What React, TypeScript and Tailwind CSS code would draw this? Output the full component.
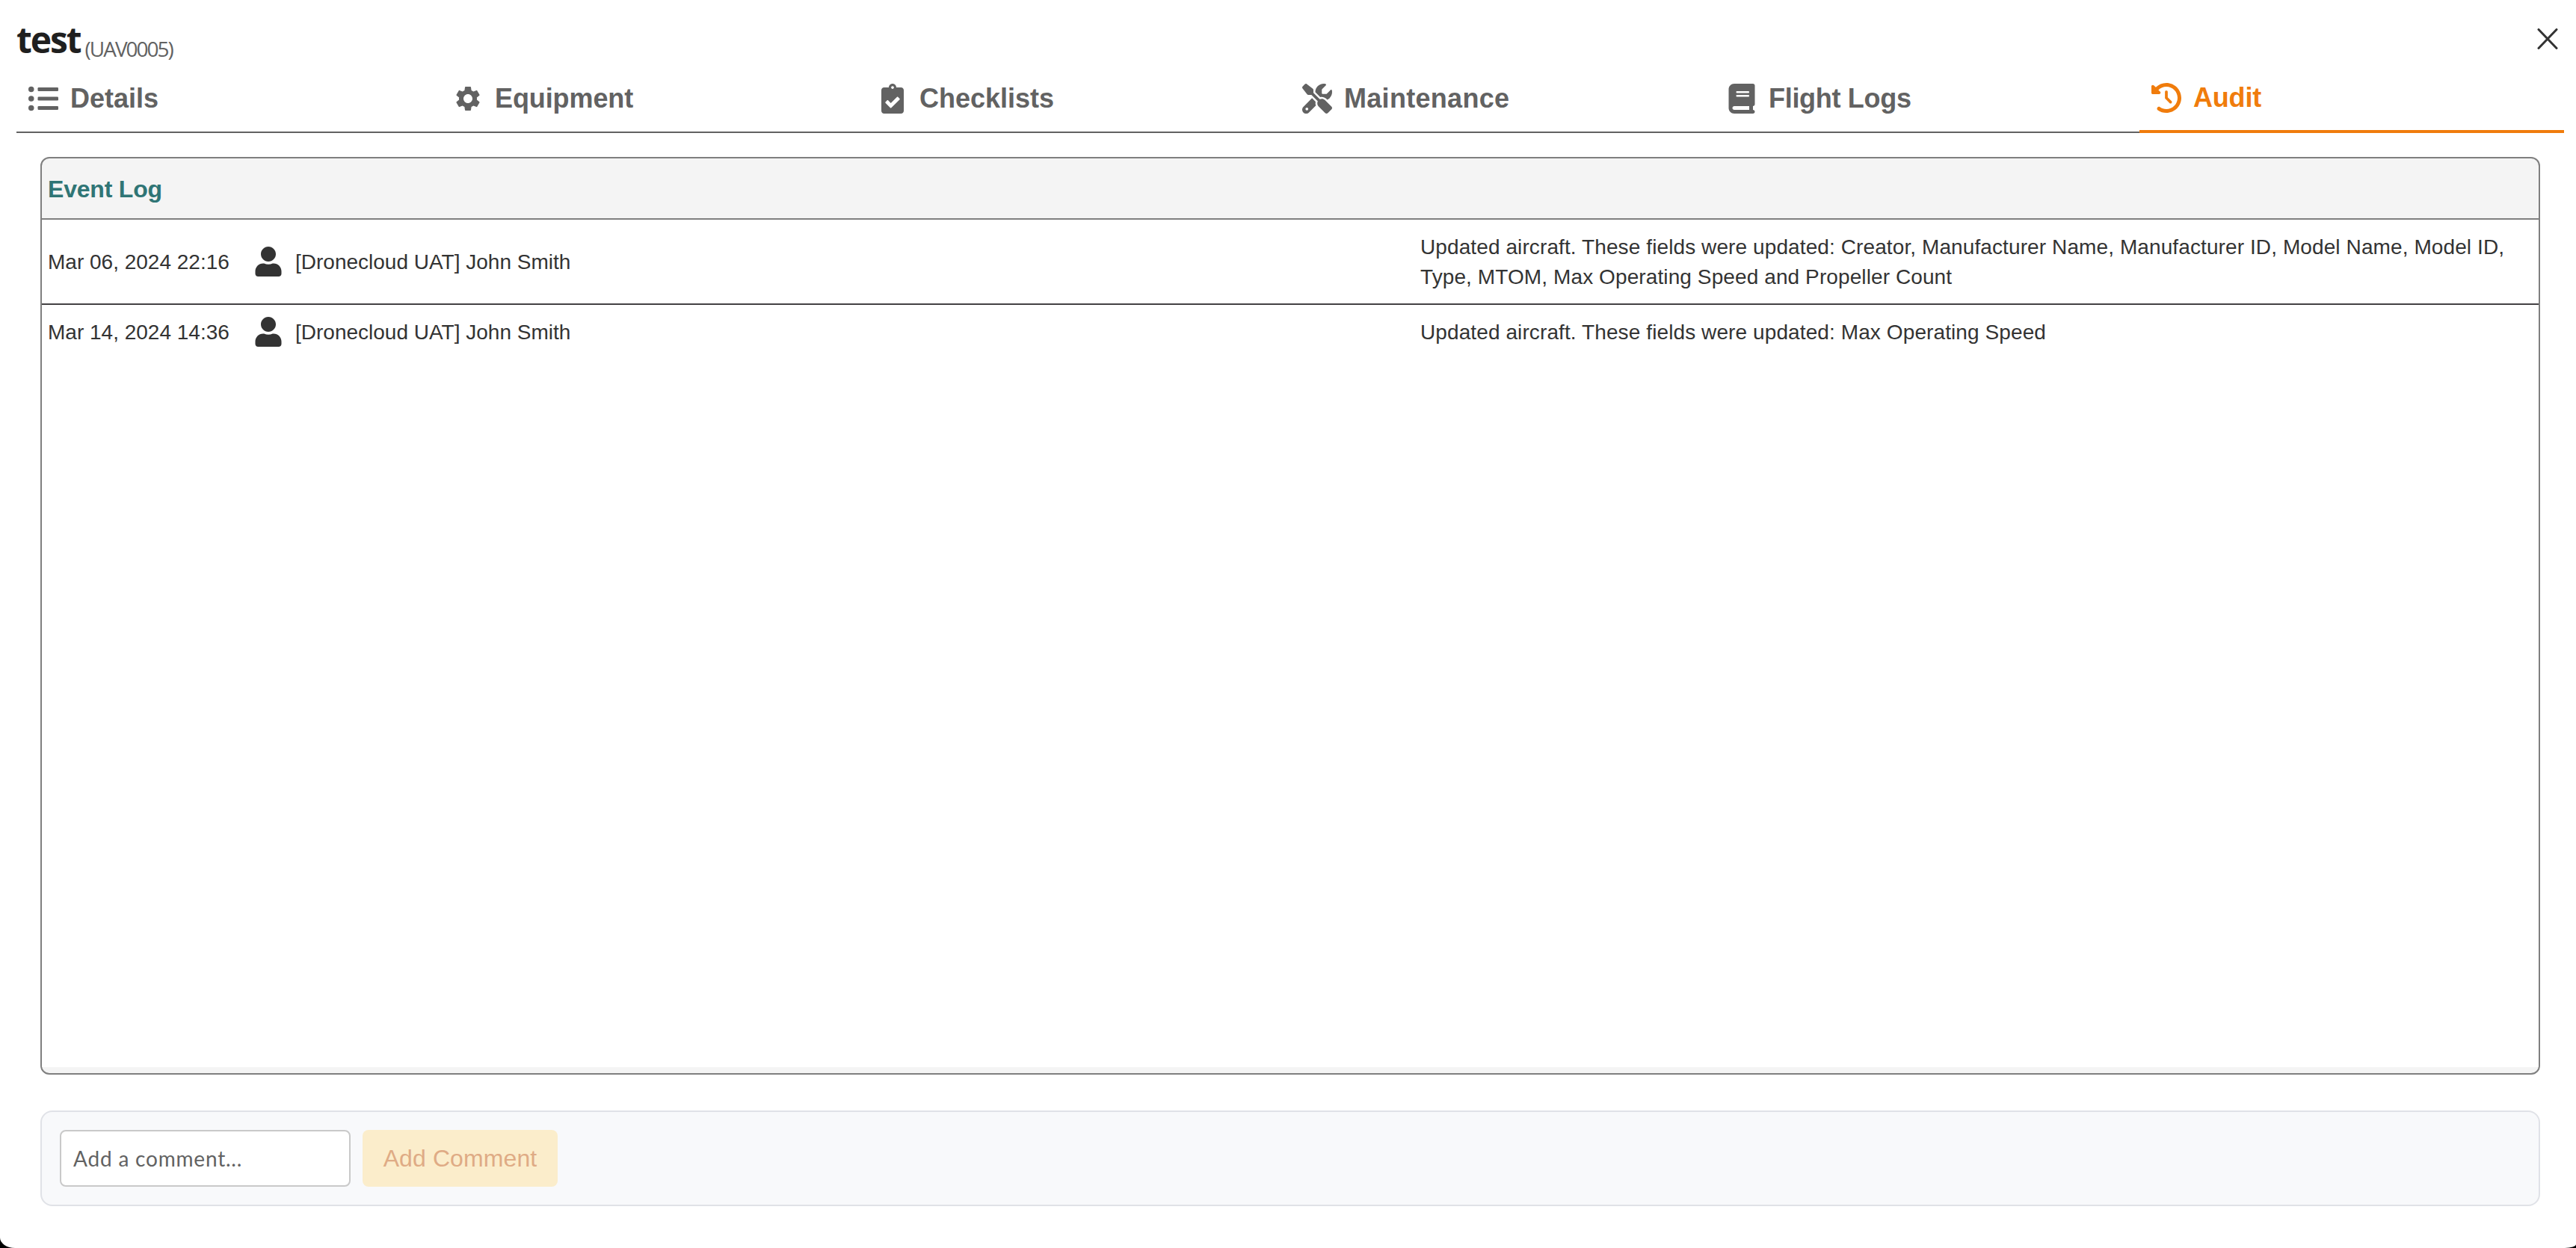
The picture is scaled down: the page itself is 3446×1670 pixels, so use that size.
import { FaScrewdriverWrench, FaBook, FaClockRotateLeft } from "react-icons/fa6";
import { FaUser } from "react-icons/fa";
import { MdSettings } from "react-icons/md";
import { ReactNode } from "react";

function ListIcon() {
  return (
    <svg viewBox="0 0 40 40" className="size-10" fill="currentColor">
      {[7.5, 20, 32.5].map((y) => (
        <g key={y}>
          <circle cx="3.750" cy={y} r="3.750" />
          <rect x="12.500" y={y - 2.5} width="27.500" height="5" rx="1.250" />
        </g>
      ))}
    </svg>
  );
}

function ClipboardCheck() {
  return (
    <svg viewBox="0 0 384 512" className="h-10 w-[30px]" fill="currentColor">
      <path
        fillRule="evenodd"
        d="M336 64h-80c0-35.300-28.700-64-64-64s-64 28.700-64 64H48C21.500 64 0 85.500 0 112v352c0 26.500 21.500 48 48 48h288c26.500 0 48-21.500 48-48V112c0-26.500-21.500-48-48-48zM192 40c13.300 0 24 10.700 24 24s-10.700 24-24 24-24-10.700-24-24 10.700-24 24-24zm121.200 231.800-143 141.800c-4.700 4.700-12.300 4.600-17-.1l-82.600-83.300c-4.700-4.700-4.600-12.300.1-17L99.100 285c4.700-4.700 12.300-4.600 17 .1l46 46.400 106-105.200c4.700-4.700 12.300-4.600 17 .1l28.200 28.400c4.700 4.800 4.600 12.300-.1 17z"
      />
    </svg>
  );
}

type TabItem = { label: string; icon: ReactNode; tracking: string; active?: boolean };

const tabs: TabItem[] = [
  { label: "Details", icon: <ListIcon />, tracking: "tracking-normal" },
  { label: "Equipment", icon: <MdSettings className="size-10" />, tracking: "tracking-[-0.1px]" },
  { label: "Checklists", icon: <ClipboardCheck />, tracking: "tracking-normal" },
  { label: "Maintenance", icon: <FaScrewdriverWrench className="size-10" />, tracking: "tracking-[0.3px]" },
  { label: "Flight Logs", icon: <FaBook className="size-10" />, tracking: "tracking-[-0.3px]" },
  { label: "Audit", icon: <FaClockRotateLeft className="size-10" />, tracking: "tracking-[-0.2px]", active: true },
];

const events = [
  {
    date: "Mar 06, 2024 22:16",
    user: "[Dronecloud UAT] John Smith",
    text: "Updated aircraft. These fields were updated: Creator, Manufacturer Name, Manufacturer ID, Model Name, Model ID, Type, MTOM, Max Operating Speed and Propeller Count",
  },
  {
    date: "Mar 14, 2024 14:36",
    user: "[Dronecloud UAT] John Smith",
    text: "Updated aircraft. These fields were updated: Max Operating Speed",
  },
];

function Tab({ label, icon, tracking, active }: TabItem) {
  return (
    <div
      className={
        active
          ? "flex h-[90px] items-center gap-4 border-b-4 border-[#f07c0c] px-4 text-[#f07c0c]"
          : "flex h-[90px] items-center gap-4 border-b-2 border-[#626262] px-4 text-[#626262]"
      }
    >
      <span className="flex w-10 justify-center pb-px">{icon}</span>
      <span className={`text-[36px] leading-[44px] font-bold whitespace-nowrap ${tracking}`}>{label}</span>
    </div>
  );
}

export default function App() {
  return (
    <div className="h-[1670px] w-[3446px] bg-black font-['Liberation_Sans',Arial,sans-serif]">
      <div className="flex h-full flex-col overflow-hidden rounded-br-[15px_5px] rounded-bl-[20px_14px] bg-white">
        <header className="flex h-[88px] shrink-0 items-start justify-between pr-6 pl-[22px]">
          <h1 className="flex items-baseline font-['Open_Sans',sans-serif] whitespace-nowrap">
            <span className="mt-[20px] text-[48px] leading-[66px] font-bold tracking-[-2.1px] text-[#1f1f1f]">test</span>
            <span className="relative top-[5px] ml-[6px] text-[28px] tracking-[-2px] text-[#626262]">(UAV0005)</span>
          </h1>
          <button className="mt-[38px]" aria-label="Close">
            <svg viewBox="0 0 28 28" className="size-7" fill="none" stroke="#333" strokeWidth="3" strokeLinecap="round">
              <path d="M2 1.500 26 26.500M26 1.500 2 26.500" />
            </svg>
          </button>
        </header>

        <nav className="ml-[22px] grid w-[3408px] shrink-0 grid-cols-6">
          {tabs.map((t) => (
            <Tab key={t.label} {...t} />
          ))}
        </nav>

        <main className="flex flex-1 flex-col pt-8 pr-12 pb-14 pl-[54px]">
          <section className="flex h-[1228px] flex-col overflow-hidden rounded-[12px] border-2 border-[#7f7f7f] bg-[#f4f4f4] pb-2">
            <h2 className="flex h-[82px] shrink-0 items-center border-b-2 border-[#7f7f7f] pt-[2px] pl-2 text-[32px] font-bold tracking-[-0.2px] text-[#2f7575]">
              Event Log
            </h2>
            <div className="flex-1 divide-y-2 divide-[#434143] bg-white text-[28px] leading-10 text-[#333]">
              {events.map((e) => (
                <div key={e.date} className="grid grid-cols-[275px_1561px_1fr] items-center py-4 pr-8 pl-2">
                  <span className="pt-px -mb-px">{e.date}</span>
                  <span className="flex items-center gap-4">
                    <span className="flex w-10 justify-center">
                      <FaUser className="size-10" />
                    </span>
                    <span className="pt-px -mb-px">{e.user}</span>
                  </span>
                  <span className="-mb-px pt-px tracking-[0.1px]">{e.text}</span>
                </div>
              ))}
            </div>
          </section>

          <section className="mt-12 flex h-32 items-center gap-4 rounded-[16px] border-2 border-[#e0e2e7] bg-[#f8f9fb] px-6">
            <input
              placeholder="Add a comment..."
              className="h-[76px] w-[389px] rounded-[8px] border-2 border-[#c9c9c9] bg-white px-4 font-['Lato',sans-serif] text-[28px] tracking-[0.8px] placeholder:text-[#626262]"
            />
            <button className="h-[76px] w-[261px] rounded-[8px] bg-[#fbedcb] text-[32px] tracking-[0.1px] text-[#dfab85]">
              Add Comment
            </button>
          </section>
        </main>
      </div>
    </div>
  );
}
